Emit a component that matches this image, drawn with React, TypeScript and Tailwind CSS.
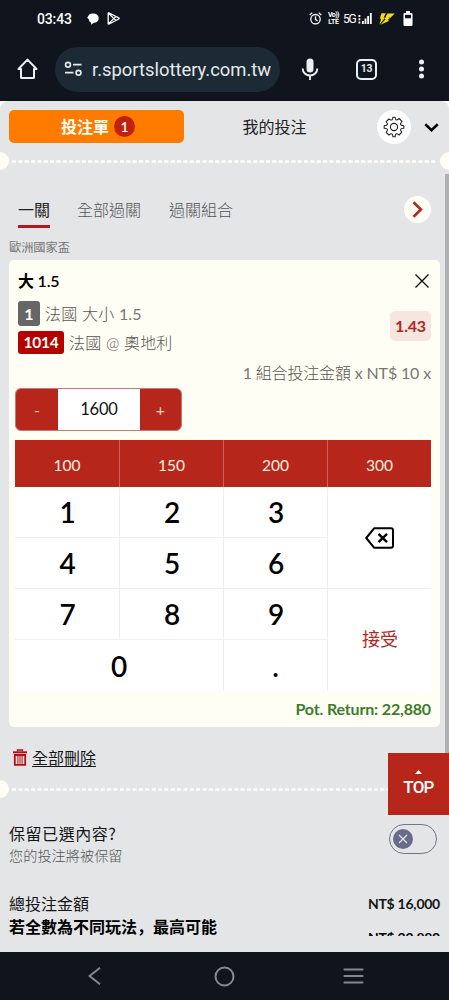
import React from "react";

const stakes = ["100", "150", "200", "300"];
const keys = ["1", "2", "3", "4", "5", "6", "7", "8", "9"];

function StatusBar() {
  return (
    <div className="flex h-[37px] items-center pl-[37px] pr-[36px] font-['Roboto'] text-white">
      <span className="w-[50px] text-[14px] font-medium leading-none tracking-[-0.15px]">03:43</span>
      <svg className="h-[12px] w-[12px]" viewBox="0 0 12 12" fill="#fff">
        <path d="M2.2 1.5C5-.3 11.5.2 11.7 5c.1 3.2-2.5 4.7-5 4.7L4.3 11.8 4 9.4C2.6 9 2 8 1.9 6.4L.2 4.8Z" />
      </svg>
      <svg className="ml-[8px] h-[13px] w-[13px]" viewBox="0 0 13 13" fill="none" stroke="#fff" strokeWidth="1.3" strokeLinejoin="round">
        <path d="M1.2 1.6Q1.2.5 2.2 1L11.7 5.8Q12.6 6.4 11.7 7L2.2 12Q1.2 12.4 1.2 11.4ZM1.5 1.2 8.8 8.4M1.5 11.8 8.8 4.6" />
      </svg>
      <div className="ml-auto flex items-center">
        <svg className="h-[13px] w-[13px]" viewBox="0 0 13 13" fill="none" stroke="#fff" strokeWidth="1.3">
          <circle cx="6.5" cy="7.2" r="4.7" />
          <path d="M6.5 4.3v3.2l2 1.4M.7 3 3.3.8M12.3 3 9.7.8" />
        </svg>
        <span className="ml-[5px] flex w-[13px] flex-col items-center text-[7px] font-bold leading-[7px] tracking-[-0.6px]">
          <span>Vo))</span>
          <span className="tracking-[-0.2px]">LTE</span>
        </span>
        <span className="ml-[3px] w-[15px] text-[12px] leading-none tracking-[-1.2px]">5G</span>
        <svg className="h-[13px] w-[14px]" viewBox="0 0 14 13" fill="#fff">
          <path d="M.5 3h1.8v2H.5zM.5 6.3h1.8v2H.5zM.5 9.6h1.8v2H.5zM4 9h1.8v3H4zM6.6 6.5h1.8V12H6.6zM9.2 4H11v8H9.2zM11.9 1h1.8v11h-1.8z" />
        </svg>
        <svg className="ml-[7px] h-[12px] w-[16px]" viewBox="0 0 16 12" fill="#f4dc18">
          <path d="M2.5.3H6.8L4.6 4.6H6.2L.3 11.7 2.2 5.8H.8Z" />
          <path d="M8.4.4H15.7L11.5 4.8H9.6L11 6.2H8.9L9.8 8.1 1.4 11.8 6.8 5.9H5.6Z" />
        </svg>
        <svg className="ml-[8px] h-[15px] w-[10px]" viewBox="0 0 10 15">
          <path d="M3 0h4v2h1.4Q9.5 2 9.5 3v10.8Q9.5 15 8.3 15H1.7Q.5 15 .5 13.8V3Q.5 2 1.6 2H3Z" fill="#fff" />
          <path d="M2 3.8h6v3.5H2z" fill="#10151d" />
        </svg>
      </div>
    </div>
  );
}

function BrowserBar() {
  return (
    <div className="flex h-[64px] items-center pl-[17px] font-['Roboto'] text-[#e6e9ed]">
      <svg className="h-[22px] w-[21px]" viewBox="0 0 21 22" fill="none" stroke="#eceff2" strokeWidth="2" strokeLinejoin="round">
        <path d="M10.5 1.6 1.5 11H4v8.4Q4 20 4.6 20h11.8Q17 20 17 19.4V11h2.5Z" />
      </svg>
      <div className="ml-[17px] flex h-[45px] w-[225px] items-center rounded-full bg-[#1b2a34] pl-[9px]">
        <svg className="h-[16px] w-[19px]" viewBox="0 0 19 16" fill="none" stroke="#e6e9ed" strokeWidth="1.7">
          <circle cx="4" cy="3.7" r="2.4" />
          <path d="M9 3.7h8.5M1 11.7h8.5" />
          <circle cx="14.5" cy="11.7" r="2.4" />
        </svg>
        <span className="ml-[9px] whitespace-nowrap pt-[2px] text-[18.4px] leading-none">r.sportslottery.com.tw</span>
      </div>
      <svg className="ml-[21px] h-[23px] w-[18px]" viewBox="0 0 18 23" fill="none" stroke="#eceff2" strokeWidth="1.9">
        <rect x="5.5" y=".5" width="7" height="14" rx="3.5" fill="#eceff2" stroke="none" />
        <path d="M1.7 10.5a7.3 7 0 0 0 14.6 0M9 17.5V22" />
      </svg>
      <div className="ml-[37px] flex h-[21px] w-[21px] items-center justify-center rounded-[5px] border-2 border-[#eceff2] text-[10.5px] font-bold leading-none tracking-[-0.3px]">
        13
      </div>
      <svg className="ml-[41px] h-[20px] w-[7px]" viewBox="0 0 7 20" fill="#eceff2">
        <circle cx="3.5" cy="3" r="2.5" />
        <circle cx="3.5" cy="10" r="2.5" />
        <circle cx="3.5" cy="17" r="2.5" />
      </svg>
    </div>
  );
}

function Perforation() {
  return (
    <div className="flex h-[18px] items-center justify-between">
      <div className="h-[18px] w-[9px] rounded-r-full bg-[#fffef5]" />
      <svg className="h-[3px] w-[431px]" viewBox="0 0 431 3">
        <path d="M3 1.5H428" stroke="#fffef8" strokeWidth="2.4" strokeDasharray="4 2.35" />
      </svg>
      <div className="h-[18px] w-[9px] rounded-l-full bg-[#fffef5]" />
    </div>
  );
}

function BetHeader() {
  return (
    <div className="flex h-[51px] items-start pl-[9px] pt-[9px]">
      <div className="flex h-[33px] w-[175px] items-center justify-center gap-[5px] rounded-[5px] bg-[#ff7b00] pl-[3px] text-[16px] font-bold text-[#fffef5]">
        <span className="leading-none">投注單</span>
        <span className="flex h-[21px] w-[21px] items-center justify-center rounded-full bg-[#c0200f] text-[14px] font-semibold leading-none">1</span>
      </div>
      <div className="flex h-[33px] w-[181px] items-center justify-center text-[16px] text-[#222]">我的投注</div>
      <div className="ml-[12px] flex h-[34px] w-[34px] items-center justify-center rounded-full bg-white">
        <svg className="h-[22px] w-[22px]" viewBox="0 0 22 22" fill="none" stroke="#222" strokeWidth="1.1" strokeLinejoin="round">
          <path d="M9 3.9Q9.7 3.5 9.9 1.2h2.2Q12.300 3.500 13 3.900q1 .5 3.100-1.400l2.900 2.900-.3.300Q17.200 8 17.500 8.500q.5.900 3.300 1.200v2.600q-2.800.3-3.300 1.200-.3.500 1.300 2.700L16.100 19q-2.200-1.600-3.100-1.100-.7.400-.9 2.900H9.900Q9.700 18.300 9 17.900 8.100 17.400 5.900 19L3.200 16.300Q4.800 14 4.500 13.500q-.5-.9-3.300-1.200V9.700Q4 9.400 4.500 8.500q.3-.5-1.300-2.800L5.900 3Q8.100 4.400 9 3.900Z" />
          <circle cx="11" cy="11" r="3.6" />
        </svg>
      </div>
      <svg className="ml-[13px] mt-[13px] h-[9px] w-[15px]" viewBox="0 0 15 9" fill="none" stroke="#000" strokeWidth="2.6">
        <path d="m1.3 1.3 6.2 5.8 6.2-5.8" />
      </svg>
    </div>
  );
}

function BetTabs() {
  return (
    <div className="flex h-[64px] pl-[18px] pt-[23px] text-[16px] font-light leading-[34px] text-[#555]">
      <span className="h-[35px] w-[32px] border-b-[3px] border-[#b5191c] font-normal text-[#222]">一關</span>
      <span className="ml-[27px]">全部過關</span>
      <span className="ml-[28px]">過關組合</span>
      <div className="ml-[171px] mt-[3px] flex h-[27px] w-[27px] items-center justify-center rounded-full bg-[#fffef5]">
        <svg className="h-[17px] w-[11px]" viewBox="0 0 11 17" fill="none" stroke="#b3261e" strokeWidth="2.6">
          <path d="m1.5 1.2 7.4 7.3-7.4 7.3" />
        </svg>
      </div>
    </div>
  );
}

function Keypad() {
  return (
    <div className="mt-[9px] w-[416px] text-black">
      <div className="grid h-[47px] grid-cols-[105px_104px_104px_103px] bg-[#b6261b] text-[15.5px] text-[#fff0df]">
        {stakes.map((s) => (
          <div key={s} className="flex items-center justify-center border-r border-[#cb6158] pt-[4px] last:border-r-0">{s}</div>
        ))}
      </div>
      <div className="flex h-[204px] bg-white">
        <div className="grid w-[313px] grid-cols-[105px_104px_104px] grid-rows-4 text-[28px] font-semibold leading-none">
          {keys.map((k) => (
            <div key={k} className="flex items-center justify-center border-b border-r border-[#eeeeee] pl-px">{k}</div>
          ))}
          <div className="col-span-2 flex items-center justify-center border-r border-[#eeeeee]">0</div>
          <div className="flex items-center justify-center border-r border-[#eeeeee]">.</div>
        </div>
        <div className="flex flex-1 flex-col">
          <div className="flex h-[102px] items-center justify-center border-b border-[#eeeeee]">
            <svg className="h-[22px] w-[29px]" viewBox="0 0 29 22" fill="none" stroke="#000" strokeWidth="2" strokeLinejoin="round">
              <path d="M9.3 1.2H26Q28 1.2 28 3.2V18.8Q28 20.8 26 20.8H9.3L1.2 11Z" />
              <path d="m13.5 6.8 8.5 8.4m0-8.4-8.5 8.4" strokeWidth="2.4" />
            </svg>
          </div>
          <div className="flex flex-1 items-center justify-center pb-[2px] pl-px text-[18px] text-[#b6261b]">接受</div>
        </div>
      </div>
    </div>
  );
}

function BetCard() {
  return (
    <section className="ml-[9px] h-[467px] w-[431px] rounded-[5px] bg-[#fffef5] px-[6px]">
      <div className="flex h-[41px] items-center justify-between pl-[3px] pr-[5px] text-[16px] font-semibold text-black">
        <span className="pt-px tracking-[-0.2px]"><b className="font-bold">大</b> 1.5</span>
        <svg className="h-[14px] w-[14px]" viewBox="0 0 14 14" stroke="#111" strokeWidth="1.4">
          <path d="m.5.5 13 13m0-13-13 13" />
        </svg>
      </div>
      <div className="flex h-[60px] justify-between pl-[3px] pr-[3px]">
        <div className="text-[16px] text-[#777770]">
          <div className="flex h-[25px] items-center">
            <span className="flex h-[25px] w-[22px] items-center justify-center rounded-[3px] bg-[#666] font-bold text-[#fffef5]">1</span>
            <span className="ml-[5px] font-light tracking-[0.2px] text-[#555550]">法國 大小 <span className="font-normal text-[#777770]">1.5</span></span>
          </div>
          <div className="mt-[5px] flex h-[23px] items-center">
            <span className="flex h-[23px] w-[46px] items-center justify-center rounded-[3px] bg-[#b50000] text-[15.5px] font-bold tracking-[-0.3px] text-[#fffef5]">1014</span>
            <span className="ml-[5px] font-light tracking-[0.2px] text-[#555550]">法國 @ 奧地利</span>
          </div>
        </div>
        <span className="mt-[10px] flex h-[30px] w-[41px] items-center justify-center rounded-[5px] bg-[#f7e6df] text-[16px] font-bold tracking-[-0.2px] text-[#b3261e]">1.43</span>
      </div>
      <div className="flex h-[27px] items-center justify-end pb-[3px] pr-[3px] text-[16px] tracking-[-0.15px] text-[#777770]">
        <span>1 <span className="font-light text-[#555550]">組合投注金額</span> x NT$ 10 x</span>
      </div>
      <div className="flex h-[43px] w-[167px] overflow-hidden rounded-[6px] border border-[#c97972] bg-[#b6261b] text-[16px] text-[#f8d4c8]">
        <span className="flex w-[42px] items-center justify-center">-</span>
        <span className="flex w-[82px] items-center justify-center bg-white text-[16.5px] tracking-[-0.2px] text-[#111]">1600</span>
        <span className="flex flex-1 items-center justify-center">+</span>
      </div>
      <Keypad />
      <div className="flex h-[35px] items-center justify-end pr-[3px] text-[16px] font-bold tracking-[-0.16px] text-[#3c7c2c]">Pot. Return: 22,880</div>
    </section>
  );
}

function Summary() {
  return (
    <div className="h-[155px] px-[9px] pt-[24px] text-[16px] leading-[22px] text-[#151515]">
      <div className="flex h-[71px] justify-between">
        <div>
          <div className="tracking-[0.55px]">保留已選內容<span className="font-['Noto_Sans_CJK_TC',sans-serif]">?</span></div>
          <div className="text-[14.2px] font-light text-[#555]">您的投注將被保留</div>
        </div>
        <div className="mr-[3px] mt-[2px] flex h-[30px] w-[48px] items-center rounded-full border border-[#74758a] pl-[3px]">
          <div className="flex h-[20px] w-[20px] items-center justify-center rounded-full bg-[#696b8c]">
            <svg className="h-[10px] w-[10px]" viewBox="0 0 10 10" stroke="#e5e6e8" strokeWidth="1.2">
              <path d="m1 1 8 8m0-8L1 9" />
            </svg>
          </div>
        </div>
      </div>
      <div className="flex items-center justify-between leading-[22px]">
        <span>總投注金額</span>
        <span className="text-[14px] font-bold tracking-[-0.25px]">NT$ 16,000</span>
      </div>
      <div className="flex h-[25px] items-start justify-between overflow-hidden font-bold text-black">
        <span lang="zh-CN" className="font-['Noto_Sans_CJK_SC',sans-serif] leading-[23px]">若全數為不同玩法，最高可能</span>
        <span className="mt-[10px] h-[11px] overflow-hidden text-[14px] font-bold leading-[25px] tracking-[-0.25px]">NT$ 22,880</span>
      </div>
    </div>
  );
}

export default function App() {
  return (
    <div className="flex h-[1000px] w-[449px] flex-col overflow-hidden bg-[#10151d]">
      <StatusBar />
      <BrowserBar />
      <main lang="zh-TW" className="relative h-[851px] overflow-hidden bg-[#fffef8] font-['Lato','Noto_Sans_CJK_TC',sans-serif]">
        <div className="h-full rounded-t-[8px] bg-[#e4e5e7]">
          <BetHeader />
          <Perforation />
          <div className="absolute right-0 top-[73px] h-[590px] w-[4px] bg-[#b0b1b3]" />
          <BetTabs />
          <div className="h-[26px] pl-[9px] text-[12.2px] leading-[27px] text-[#757575]">歐洲國家盃</div>
          <BetCard />
          <div className="flex h-[53px] items-center pl-[13px] pt-[8px]">
            <svg className="h-[17px] w-[14px]" viewBox="0 0 14 17" fill="none" stroke="#b90f14">
              <path d="M4.5 2.5V1h5v1.500" strokeWidth="1.3" />
              <path d="M0 3.300h14" strokeWidth="2" />
              <path d="M1.800 6v9.800h10.400V6Z" strokeWidth="1.8" />
              <path d="M4.900 6.500v8.300M7 6.500v8.300M9.100 6.500v8.300" strokeWidth="1" />
            </svg>
            <span className="ml-[5px] mt-px border-b border-[#151515] text-[16px] leading-[17px] text-[#151515]">全部刪除</span>
          </div>
          <Perforation />
          <Summary />
          <div className="absolute right-0 top-[652px] flex h-[62px] w-[61px] flex-col items-center bg-[#b6261b] pt-[17px] font-['Roboto'] text-[17px] font-medium leading-none tracking-[-0.8px] text-white">
            <svg className="h-[4px] w-[7px]" viewBox="0 0 7 4" fill="#fff"><path d="M0 4 3.5 0 7 4Z" /></svg>
            <span className="mt-[5px]">TOP</span>
          </div>
        </div>
      </main>
      <nav className="flex h-[48px] items-center pl-[88px] text-[#858a8e]">
        <svg className="h-[18px] w-[13px]" viewBox="0 0 13 18" fill="none" stroke="currentColor" strokeWidth="2"><path d="M12 .8 1.5 9 12 17.2" /></svg>
        <svg className="ml-[113px] h-[21px] w-[21px]" viewBox="0 0 21 21" fill="none" stroke="currentColor" strokeWidth="2"><circle cx="10.5" cy="10.5" r="9" /></svg>
        <svg className="ml-[108px] h-[16px] w-[21px]" viewBox="0 0 21 16" fill="none" stroke="currentColor" strokeWidth="2.2" strokeLinecap="round"><path d="M1.5 1.5h18M1.5 8h18M1.5 14.5h18" /></svg>
      </nav>
    </div>
  );
}
